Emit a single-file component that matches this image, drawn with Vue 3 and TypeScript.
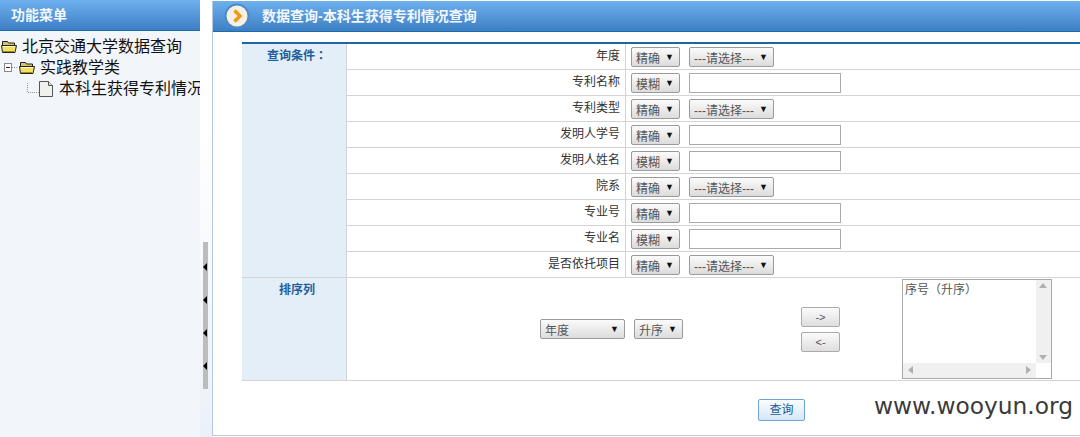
<script setup lang="ts">
interface Row { label: string; mode: string; kind: 'select' | 'input' }
const rows: Row[] = [
  { label: '年度', mode: '精确', kind: 'select' },
  { label: '专利名称', mode: '模糊', kind: 'input' },
  { label: '专利类型', mode: '精确', kind: 'select' },
  { label: '发明人学号', mode: '精确', kind: 'input' },
  { label: '发明人姓名', mode: '模糊', kind: 'input' },
  { label: '院系', mode: '精确', kind: 'select' },
  { label: '专业号', mode: '精确', kind: 'input' },
  { label: '专业名', mode: '模糊', kind: 'input' },
  { label: '是否依托项目', mode: '精确', kind: 'select' },
]
</script>

<template>
  <div class="page">
    <aside class="side">
      <div class="side-head">功能菜单</div>
      <ul class="tree">
        <li class="node n1">
          <svg class="folder" width="16" height="13" viewBox="0 0 16 13"><path d="M1.500 5V1.500h5l1 1.500h6v3" fill="#d8c468" stroke="#222"/><path d="M.5 5.500h15l-1.500 7H1.500z" fill="#f4e060" stroke="#222"/><path d="M2 6.500h12" stroke="#fffbd0"/><path d="M2 11.500h11" stroke="#a88a20"/></svg>
          <span>北京交通大学数据查询</span>
        </li>
        <li class="node n2">
          <svg class="plus" width="14" height="10" viewBox="0 0 14 10"><rect x=".5" y=".5" width="7" height="8" fill="#fff" stroke="#888"/><path d="M2 4.500h4" stroke="#222"/><path d="M8 4.500h6" stroke="#999" stroke-dasharray="1 1"/></svg>
          <svg class="folder" width="16" height="13" viewBox="0 0 16 13"><path d="M1.500 5V1.500h5l1 1.500h6v3" fill="#d8c468" stroke="#222"/><path d="M.5 5.500h15l-1.500 7H1.500z" fill="#f4e060" stroke="#222"/><path d="M2 6.500h12" stroke="#fffbd0"/><path d="M2 11.500h11" stroke="#a88a20"/></svg>
          <span>实践教学类</span>
        </li>
        <li class="node n3">
          <svg class="branch" width="12" height="12" viewBox="0 0 12 12"><path d="M.5 0v9.500H12" fill="none" stroke="#999" stroke-dasharray="1 1"/></svg>
          <svg class="doc" width="14" height="16" viewBox="0 0 14 16"><path d="M.5.500h9l4 4v11H.5z" fill="#f0f0ec" stroke="#555"/><path d="M9.500.500v4h4" fill="#ddd" stroke="#555"/></svg>
          <span>本科生获得专利情况</span>
        </li>
      </ul>
    </aside>

    <div class="split">
      <div class="handle">
        <i></i><i></i><i></i><i></i>
      </div>
    </div>

    <main class="main">
      <header class="main-head">
        <svg class="go" width="26" height="26" viewBox="0 0 26 26">
          <circle cx="13" cy="13" r="12.500" fill="#4c8ac8"/>
          <circle cx="13" cy="13" r="10.500" fill="#f4f0e4"/>
          <path d="M10.500 7.500 16 13l-5.500 5.500" fill="none" stroke="#ef9a16" stroke-width="3.500"/>
        </svg>
        <h1>数据查询-本科生获得专利情况查询</h1>
      </header>

      <section class="form">
        <div class="group first">
          <div class="group-title cjk-tc">查询条件：</div>
          <div class="rows">
            <div v-for="r in rows" :key="r.label" class="row">
              <div class="label">{{ r.label }}</div>
              <div class="ctrl">
                <span class="sel mode">{{ r.mode }}<b>▼</b></span>
                <span v-if="r.kind === 'select'" class="sel choose">---请选择---<b>▼</b></span>
                <input v-else class="inp" type="text" />
              </div>
            </div>
          </div>
        </div>
        <div class="group sort">
          <div class="group-title sort-title">排序列</div>
          <div class="sort-body">
            <span class="sel wide">年度<b>▼</b></span>
            <span class="sel mode order">升序<b>▼</b></span>
            <div class="moves">
              <span class="btn">-&gt;</span>
              <span class="btn">&lt;-</span>
            </div>
            <div class="list">
              <div class="list-text cjk-tc">序号（升序）</div>
              <div class="sb-v"><i class="up"></i><i class="down"></i></div>
              <div class="sb-h"><i class="left"></i><i class="right"></i></div>
            </div>
          </div>
        </div>
        <div class="actions"><span class="query">查询</span></div>
      </section>
      <div class="mark">www.wooyun.org</div>
    </main>
  </div>
</template>

<style>
html, body { margin: 0; background: #fff; overflow: hidden; }
</style>

<style scoped>
.page {
  display: flex; width: 1080px; height: 437px; overflow: hidden;
  font-family: "Liberation Sans", "Noto Sans CJK SC", sans-serif; font-size: 12px; color: #333;
}
.cjk-tc { font-family: "Liberation Sans", "Noto Sans CJK TC", sans-serif; }
.side { width: 200px; flex: none; background: #f2f5f9; overflow: hidden; }
.side-head {
  height: 30px; line-height: 30px; padding-left: 11px;
  background: linear-gradient(#6eb0ee, #3d7fc4); border-bottom: 1px solid #1f6aa8;
  color: #f2f7fc; font-size: 14px; font-weight: 700;
}
.tree { list-style: none; margin: 0; padding: 5px 0 0; color: #111; font-size: 16px; white-space: nowrap; }
.node { display: flex; align-items: center; height: 21px; line-height: 21px; }
.node svg { flex: none; }
.n1 { padding-left: 1px; gap: 5px; }
.n2 { padding-left: 4px; gap: 5px; }
.n2 .folder { margin-left: -4px; }
.n3 { padding-left: 27px; }
.n3 .doc { margin: 0 6px 0 0; }
.split { width: 12px; flex: none; background: linear-gradient(#fff 30%, #ebf1f9); }
.handle {
  margin: 242px 0 0 3px; width: 5px; height: 147px; background: #bcbcbc;
  display: flex; flex-direction: column; padding-top: 21px; gap: 25px; box-sizing: border-box;
}
.handle i {
  display: block; width: 0; height: 0; border: 4px solid transparent; border-left: 0;
  border-right: 4px solid #000;
}
.main {
  flex: 1; position: relative; margin-bottom: 1px; margin-top: 1px;
  border-left: 1px solid #b4c7de; border-bottom: 1px solid #b8cce2;
  display: flex; flex-direction: column; min-width: 0;
}
.main-head {
  height: 30px; flex: none; display: flex; align-items: center; padding-left: 11px;
  background: linear-gradient(#6eb0ee, #3d7fc4); border-bottom: 1px solid #1f6aa8;
}
.go { flex: none; }
.main-head h1 { margin: 0 0 0 12px; color: #f2f7fc; font-size: 14px; font-weight: 700; line-height: 30px; }
.form { padding: 10px 0 0 29px; }
.group { display: flex; }
.first { border-top: 2px solid #1a66a6; border-bottom: 1px solid #d4d4d4; }
.group-title {
  width: 105px; flex: none; box-sizing: border-box; padding-left: 6px; background: #e4eef9; border-right: 1px solid #d0d4d8;
  text-align: center; color: #1d5f9c; font-weight: 700; line-height: 24px;
}
.rows { flex: 1; }
.row { display: flex; height: 26px; box-sizing: border-box; border-bottom: 1px solid #d4d4d4; }
.row:last-child { border-bottom: 0; height: 25px; }
.label { width: 279px; flex: none; box-sizing: border-box; padding-right: 5px; text-align: right; line-height: 24px; border-right: 1px solid #d4d4d4; }
.ctrl { display: flex; align-items: center; gap: 9px; padding: 1px 0 0 5px; }
.sel {
  height: 20px; box-sizing: border-box; display: flex; align-items: center; justify-content: space-between;
  padding: 0 5px 0 4px; border: 1px solid #9a9a9a; border-radius: 2px; background: linear-gradient(#fbfbfb, #dcdcdc);
  color: #555; font-size: 12px; flex: none;
}
.sel b { color: #111; font-size: 9px; font-weight: 400; margin-right: 0; }
.mode { width: 49px; }
.choose { width: 85px; }
.inp { width: 152px; height: 20px; box-sizing: border-box; margin: 0; padding: 0 3px; border: 1px solid #aaa; background: #fff; outline: none; }
.sort { border-bottom: 1px solid #d4d4d4; height: 103px; box-sizing: border-box; }
.sort-title { line-height: 24px; }
.sort-body { flex: 1; display: flex; align-items: center; padding-left: 193px; }
.wide { width: 85px; }
.order { margin-left: 9px; }
.moves { display: flex; flex-direction: column; gap: 5px; margin-left: 118px; }
.btn {
  width: 39px; height: 20px; box-sizing: border-box; border: 1px solid #aaa; border-radius: 2px;
  background: linear-gradient(#fbfbfb, #dedede); text-align: center; line-height: 18px; color: #555; font-size: 11px;
}
.list {
  position: relative; width: 150px; height: 100px; box-sizing: border-box; margin-left: 62px;
  border: 1px solid #a8a8a8; background: #fff; color: #555;
}
.list-text { padding: 2px; line-height: 16px; }
.sb-v { position: absolute; right: 0; top: 0; width: 15px; height: 83px; background: #f0f0f0; }
.sb-h { position: absolute; left: 0; bottom: 0; width: 133px; height: 15px; background: #f0f0f0; }
.sb-v i, .sb-h i { position: absolute; width: 0; height: 0; border: 4px solid transparent; }
.up { left: 3px; top: 3px; border-top: 0 !important; border-bottom: 5px solid #b0b0b0 !important; }
.down { left: 3px; bottom: 3px; border-bottom: 0 !important; border-top: 5px solid #b0b0b0 !important; }
.left { left: 5px; top: 3px; border-left: 0 !important; border-right: 5px solid #b0b0b0 !important; }
.right { right: 5px; top: 3px; border-right: 0 !important; border-left: 5px solid #b0b0b0 !important; }
.actions { padding: 18px 0 0 516px; }
.query {
  display: block; width: 47px; height: 22px; box-sizing: border-box; text-align: center; line-height: 20px;
  border: 1px solid #6fa3d2; border-radius: 2px; background: linear-gradient(#fafdff, #d5e6f6); color: #1d5a92;
}
.mark {
  position: absolute; left: 661px; top: 390px; color: #3a3a3a; line-height: 30px; white-space: nowrap;
  font-family: "DejaVu Sans", sans-serif; font-size: 23.300px;
}
</style>
